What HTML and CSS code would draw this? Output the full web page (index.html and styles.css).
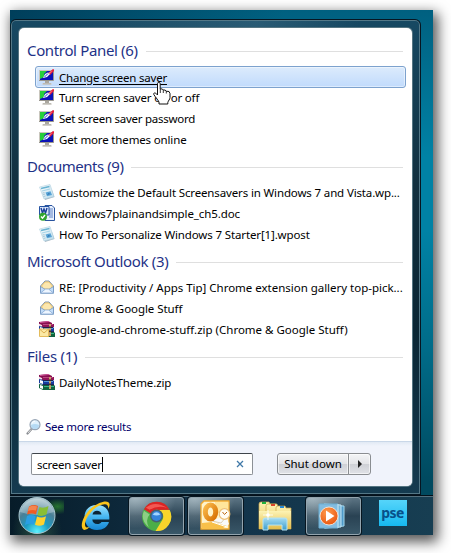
FILE: index.html
```html
<!DOCTYPE html>
<html lang="en">
<head>
<meta charset="utf-8">
<title>Start menu search</title>
<link rel="stylesheet" href="styles.css">
</head>
<body>
<svg class="defs" width="0" height="0" aria-hidden="true">
  <defs>
    <linearGradient id="paper" x1="0" y1="0" x2="1" y2="1"><stop offset="0" stop-color="#fff"/><stop offset="1" stop-color="#b9dcec"/></linearGradient>
    <linearGradient id="folder" x1="0" y1="0" x2="0" y2="1"><stop offset="0" stop-color="#fdf3b4"/><stop offset="1" stop-color="#e3bd4c"/></linearGradient>
    <linearGradient id="glass" x1="0" y1="0" x2="0" y2="1"><stop offset="0" stop-color="#a5dcf3"/><stop offset="1" stop-color="#3b9ccc"/></linearGradient>
    <linearGradient id="ie" x1="0" y1="0" x2="0" y2="1"><stop offset="0" stop-color="#9be2ff"/><stop offset=".5" stop-color="#42b4f0"/><stop offset="1" stop-color="#1686d4"/></linearGradient>
    <linearGradient id="gold" x1="0" y1="0" x2="1" y2="1"><stop offset="0" stop-color="#f9b94a"/><stop offset="1" stop-color="#d87204"/></linearGradient>
    <radialGradient id="orb" cx=".5" cy=".95" r=".95"><stop offset="0" stop-color="#5df3ff"/><stop offset=".35" stop-color="#1b9cc4"/><stop offset=".65" stop-color="#4a7f96"/><stop offset="1" stop-color="#b4cbd3"/></radialGradient>
    <radialGradient id="play" cx=".4" cy=".3" r=".8"><stop offset="0" stop-color="#ff9b4d"/><stop offset="1" stop-color="#e64f0a"/></radialGradient>
    <symbol id="monitor" viewBox="0 0 16 16">
      <path d="M0 1h15v11H0z" fill="#c9c6bd"/><path d="M14.500 1v10.500H0" fill="none" stroke="#99968f"/>
      <path d="M1 2h13v9H1z" fill="#0b12b8"/><path d="M1 2h7L5 5v3l-4 2z" fill="#26cf3a"/>
      <path d="M9 4l5-4 1 .5V2l-4 4z" fill="#e8203c"/><path d="M4 9l2-4 3-1.500L11 5 8 8z" fill="#fff"/><path d="M5.500 8l3.500-3.500" stroke="#2340c8"/><path d="M9.500 4.500l3-2" stroke="#f9a0b4" stroke-width=".8"/>
      <path d="M6 12h4v2h2v1.500H4V14h2z" fill="#aaa79f"/><path d="M3 15h10" stroke="#d0cec8"/>
    </symbol>
    <symbol id="post" viewBox="0 0 16 16">
      <path d="M4 5l9 1 2.500 7L6 16z" fill="#a9bac6"/><path d="M.5 3L11 .5l4 12L5 15z" fill="url(#paper)" stroke="#aed0df" stroke-width=".6"/>
      <path d="M2 4.500l8.500-2" stroke="#69b3d1" stroke-width="1.500"/><path d="M3 7l8-2" stroke="#a4d2e6"/><path d="M6.500 8.500l5-1.200 1.500 3.700-5 1.200z" fill="#5ba6d7"/><path d="M8 11l1.500-2 2 1z" fill="#2f72b0"/><path d="M3.500 9l2-.5m-1.500 2l2-.5m-1.500 2.500l2-.5" stroke="#a0bdcb" stroke-width=".8"/>
    </symbol>
    <symbol id="word" viewBox="0 0 16 16">
      <path d="M6 .5h7l2.500 2.500v12.500H6z" fill="#e9f1fd" stroke="#28539e"/><path d="M10 4h4m-4 2h4m-4 2h4m-4 2h4m-4 2h4" stroke="#3a67b7" stroke-width=".8"/>
      <path d="M.5 1.500h9.500v8.500H.5z" fill="#dce8fb" stroke="#2453a3"/><path d="M2 3l1.500 5L5 4l1.500 4L8 3" fill="none" stroke="#193f99" stroke-width="1.400"/>
      <circle cx="4" cy="11.700" r="4" fill="#31a52f"/><path d="M2 11.500l1.500 1.700L6 10" fill="none" stroke="#fff" stroke-width="1.400"/>
    </symbol>
    <symbol id="mail" viewBox="0 0 16 16">
      <path d="M1.500 7L6 2h4l4.500 5v7h-13z" fill="#fbe2a0" stroke="#7f97b5"/><path d="M3 6.500L6 3h4l3 3.500V10H3z" fill="#fce7ae" stroke="#e5b95c" stroke-width=".7"/>
      <path d="M1.500 7.500L8 11.500l6.500-4V14h-13z" fill="#c2dcf8" stroke="#6c91bd" stroke-width=".7"/><path d="M1.500 14L6.500 10h3l5 4z" fill="#eef6ff" stroke="#85a9d3" stroke-width=".8"/>
    </symbol>
    <symbol id="books" viewBox="0 0 16 16">
      <path d="M0 1l9-1 4 2v3L3 6 0 4z" fill="#87104f"/><path d="M1 1.500l9-1" stroke="#d4589d"/><path d="M0 3.500l3 1.500" stroke="#f3e4eb" stroke-width="1.500"/><path d="M3 3h12v3H4z" fill="#8e1457"/><path d="M4 3.500h10" stroke="#c7508c" stroke-width=".8"/>
      <path d="M0 5l4 1h10l1 1v4H4L0 9z" fill="#173b9d"/><path d="M1 6l3 1v3L1 9z" fill="#fff"/><path d="M5 7.500h9" stroke="#5294dd"/>
      <path d="M0 10l4 1h11l1 1v4H4l-4-2z" fill="#11633f"/><path d="M1 11l3 1v3l-3-1z" fill="#fff"/><path d="M5 12.500h10" stroke="#38b884"/>
      <path d="M10 3h2v12h-2z" fill="#caa06b"/><path d="M10 6h2m-2 4h2" stroke="#382818"/><path d="M4 10.700h11M4 6.500h10" stroke="#201b35" stroke-width=".8"/>
    </symbol>
    <symbol id="lens" viewBox="0 0 16 16">
      <path d="M1.500 14.500L6 9.500" stroke="#8c8f94" stroke-width="2.200" stroke-linecap="round"/><path d="M2 14l3-3.500" stroke="#ddd"/>
      <circle cx="9" cy="5.700" r="5" fill="#dff1fd" stroke="#97a5b5" stroke-width="1.200"/><path d="M5 6a4 4 0 0 0 8 0q-4-2-8 0z" fill="#b5daf4"/><path d="M6 4.500q1-2.500 3-2.300" stroke="#fff" fill="none"/>
    </symbol>
  </defs>
</svg>

<main class="desktop">
  <section class="menu">
    <div class="panel">
      <div class="results">
        <h2><span class="h1">Control Panel (6)</span></h2>
        <ul>
          <li class="selected"><svg><use href="#monitor"/></svg><span class="r1">Change screen saver</span></li>
          <li><svg><use href="#monitor"/></svg><span class="r2">Turn screen saver on or off</span></li>
          <li><svg><use href="#monitor"/></svg><span class="r3">Set screen saver password</span></li>
          <li><svg><use href="#monitor"/></svg><span class="r4">Get more themes online</span></li>
        </ul>
        <h2><span class="h2">Documents (9)</span></h2>
        <ul>
          <li><svg><use href="#post"/></svg><span class="r5">Customize the Default Screensavers in Windows 7 and Vista.wp...</span></li>
          <li><svg><use href="#word"/></svg><span class="r6">windows7plainandsimple_ch5.doc</span></li>
          <li><svg><use href="#post"/></svg><span class="r7">How To Personalize Windows 7 Starter[1].wpost</span></li>
        </ul>
        <h2><span class="h3">Microsoft Outlook (3)</span></h2>
        <ul>
          <li><svg><use href="#mail"/></svg><span class="r8">RE: [Productivity / Apps Tip] Chrome extension gallery top-pick...</span></li>
          <li><svg><use href="#mail"/></svg><span class="r9">Chrome &amp; Google Stuff</span></li>
          <li><svg viewBox="0 0 16 16"><use href="#books" width="16" height="16"/><path d="M.5 8h9v7.500h-9z" fill="#fbe9a4" stroke="#e3bb5c"/><path d="M.5 8L5 12l4.500-4" fill="none" stroke="#dcae50"/></svg><span class="r10">google-and-chrome-stuff.zip (Chrome &amp; Google Stuff)</span></li>
        </ul>
        <h2><span class="h4">Files (1)</span></h2>
        <ul>
          <li><svg><use href="#books"/></svg><span class="r11">DailyNotesTheme.zip</span></li>
        </ul>
        <a class="more"><svg><use href="#lens"/></svg><span>See more results</span></a>
      </div>
      <footer>
        <div class="search"><span>screen saver</span><i class="caret"></i>
          <svg class="clear" viewBox="0 0 8 8"><path d="M1 1l6 6M7 1L1 7" stroke="#3f78a8" stroke-width="1.300"/></svg></div>
        <div class="shutdown"><button>Shut down</button><button class="arrow"><svg viewBox="0 0 4 8"><path d="M0 0l4 4-4 4z" fill="#222"/></svg></button></div>
      </footer>
    </div>
  </section>

  <nav class="taskbar">
    <div class="task start">
      <svg width="46" height="38" viewBox="0 0 46 38">
        <circle cx="27" cy="18.500" r="18" fill="url(#orb)" stroke="#a8c4cd" stroke-width="1"/>
        <path d="M10 15a17.500 17.500 0 0 1 34 0q-17 6-34 0z" fill="#fff" opacity=".28"/>
        <path d="M19 9.500q4.500-2.500 9-.5l-2 8.500q-4-2-9 0z" fill="#ef5b24"/>
        <path d="M29.500 10q4 2 9-1l-2 8.500q-5 2.500-9 .5z" fill="#89bf35"/>
        <path d="M17 19q4.500-2 8.500.2l-2 8.500q-4-2-8.500.3z" fill="#2a9fe5"/>
        <path d="M27 19.500q4.500 2 9-.3l-2 8.300q-4.500 2.500-9 .3z" fill="#ffd22e"/>
        <path d="M19 10q4-2 8-.5l-1 4q-4-1-8 .5z" fill="#f7a16c" opacity=".6"/>
      </svg>
    </div>
    <div class="task ie">
      <svg width="32" height="32" viewBox="0 0 32 32">
        <path fill-rule="evenodd" d="M17 5C9 5 4.500 10 4.500 17S9 30 17 30c6 0 10.500-3 12-8h-7.500c-1 1.500-2.300 2-4.200 2-3 0-4.800-1.700-5-4.500h17C30 10 25 5 17 5zM12.500 14.500C13 12 14.500 10.800 17 10.800s4.200 1.200 4.500 3.700z" fill="url(#ie)"/>
        <path d="M4.500 30C-1.500 28 3 15 12 7.500 20 1 29-.5 29.500 4c.3 2-.5 3.700-1.500 5 .5-3-.5-4.700-3-4.800-4-.2-9 2.500-13.500 7.300C6 17.500 3 26 6.500 27.500l3-.5q-2.500 3-5 3z" fill="#fbc51c"/>
      </svg>
    </div>
    <div class="task open chrome">
      <svg width="31" height="31" viewBox="0 0 32 32">
        <circle cx="16" cy="16" r="15" fill="#4bae48"/>
        <path d="M3 8.500A15 15 0 0 1 29.500 9L16 9.200A7 7 0 0 0 10 13z" fill="#dc2424"/>
        <path d="M15 9.200h14.600A15 15 0 0 1 15 31l7.300-12A7 7 0 0 0 16 9z" fill="#f8d52b"/>
        <path d="M5 7Q14-1 27 7q-10-3-18 2z" fill="#ff756b" opacity=".65"/><path d="M3 10q-4 10 5 17-4-8 1-13z" fill="#a9dca0" opacity=".7"/>
        <circle cx="16" cy="15.500" r="6.700" fill="#45616f"/><circle cx="16" cy="15.500" r="5.200" fill="#3484db"/><path d="M12 14q4-5 8 0-4 2-8 0z" fill="#a2d5ff"/>
      </svg>
    </div>
    <div class="task open outlook">
      <svg width="31" height="32" viewBox="0 0 31 32">
        <path d="M4 1h25v28H1V4z" fill="#fff3ca" stroke="#f3a92a" stroke-width="1.300"/>
        <path d="M15 2h13v11H15z" fill="#ffe59b"/><path d="M13 20l13-4 3 8-3 3z" fill="#f9fafc"/><path d="M12 21l9 2 6-7" fill="none" stroke="#dccfb4"/>
        <ellipse cx="10.500" cy="12" rx="5.200" ry="7" fill="none" stroke="url(#gold)" stroke-width="5"/><path d="M2 23l10-1 15 4-6 3H2z" fill="#f8c04a"/><path d="M12 22l15 5" stroke="#fff"/>
        <circle cx="24.500" cy="14" r="5.300" fill="#fffdf5" stroke="#edc079" stroke-width="1.200"/><path d="M22.500 12l2 2.500L27 12" fill="none" stroke="#bd6a18"/>
      </svg>
    </div>
    <div class="task explorer">
      <svg width="34" height="30" viewBox="0 0 34 30">
        <path d="M1 28V3q0-2 2-2h8l1 2h6v25z" fill="url(#folder)" stroke="#c9a44b" stroke-width=".7"/><path d="M8 28V5q0-2 2-2h9l1 3h6v22z" fill="url(#folder)" stroke="#cba94e" stroke-width=".7"/>
        <path d="M18 28V7q0-2 2-2h7l1 2h5v21z" fill="url(#folder)" stroke="#c9a44b" stroke-width=".7"/><path d="M1 10h32v18H1z" fill="url(#folder)"/>
        <path d="M4 2h4" stroke="#20b13c" stroke-width="2"/><path d="M13 4h4" stroke="#dc4429" stroke-width="2"/><path d="M22 6h4" stroke="#2789d4" stroke-width="2"/>
        <path d="M5 29V19q0-2 2-2h20q2 0 2 2v10h-5v-5H10v5z" fill="url(#glass)" stroke="#b5e3f3"/><path d="M10 9v10M5 14h10" stroke="#fff" stroke-width=".8"/><circle cx="10" cy="14" r="1.800" fill="#fff"/>
      </svg>
    </div>
    <div class="task open player">
      <svg width="28" height="26" viewBox="0 0 28 26">
        <path d="M7 2l19 1v20L7 25z" fill="#4e99c8" stroke="#a4d9ef"/><path d="M6 1l17 1v22L6 25z" fill="#76b6da" stroke="#c3e5f4"/><path d="M1 1h19v24H1z" fill="#83bce0" stroke="#6aaed3"/><path d="M20 1v24" stroke="#d2effb"/>
        <circle cx="11" cy="13" r="9" fill="url(#play)" stroke="#fff0df" stroke-width=".8"/><path d="M8 7.500l8.500 5.500L8 18.500z" fill="#fff"/>
      </svg>
    </div>
    <div class="task pse"><span>pse</span></div>
  </nav>

  <svg class="pointer" width="18" height="23" viewBox="0 0 18 23">
    <path d="M4.500 1.500q0-1 1.300-1t1.400 1V7q2.500-.7 3 1 2.500-.5 2.900 1.200 3.900-.5 3.900 2.300v4c0 2-1.700 3-2.200 5v1.500H6V20C4.500 17 2.200 15 .8 12.500c-.8-1.700 1.700-2.500 3.700.5z" fill="#fff" stroke="#111" stroke-width="1"/>
    <path d="M7.300 7v4M10.300 8v3M13.300 9v2.500" stroke="#222" stroke-width=".9"/>
  </svg>
</main>
</body>
</html>
```
FILE: styles.css
```css
* { box-sizing: border-box; }
body {
  margin: 0;
  padding: 10px;
  width: 451px;
  height: 553px;
  overflow: hidden;
  background: #fff;
  font: 11.5px/21px "Noto Sans", "Open Sans", sans-serif;
  color: #000;
}
.defs { position: absolute; }
.desktop {
  position: relative;
  width: 423px;
  height: 525px;
  display: flex;
  flex-direction: column;
  background:
    linear-gradient(90deg, rgba(0,35,60,.55), transparent 65%) 0 0 / 100% 12px no-repeat,
    linear-gradient(#006080, #0082a5 28%, #0082a5 42%, #006b88 65%, #00495f 90%);
  box-shadow: 3px 5px 12px 2px rgba(0,0,0,.65);
}
.menu {
  width: 411px;
  height: 476px;
  margin-top: 9px;
  padding: 8px;
  border: 1px solid #061521;
  border-left-color: #0b202b;
  border-radius: 6px 6px 0 0;
  background: linear-gradient(90deg, transparent 10%, rgba(70,120,145,.4) 60%, transparent 85%) 0 0 / 100% 8px no-repeat,
    linear-gradient(#174963, #12303f 35%, #0a2634 65%, #153b50);
  box-shadow: inset 0 0 0 1px #547887;
}
.panel {
  width: 393px;
  height: 458px;
  display: flex;
  flex-direction: column;
  overflow: hidden;
  border-radius: 5px;
  background: #fff;
  box-shadow: 0 0 0 1px #557582;
}
.results {
  height: 413px;
  padding: 6px 6px 0 8px;
  display: flex;
  flex-direction: column;
}
h2 {
  margin: 0;
  height: 32px;
  padding-right: 3px;
  display: flex;
  align-items: center;
  gap: 8px;
  font-weight: 400;
  font-size: 15px;
  line-height: 32px;
  color: #1e3287;
  white-space: nowrap;
}
h2::after { content: ""; flex: 1; height: 1px; margin-top: 3px; background: #dfdfdf; }
.h1 { letter-spacing: -.35px; }
.h2 { letter-spacing: -.45px; }
.h3 { letter-spacing: -.33px; }
.h4 { letter-spacing: -.27px; }
ul { list-style: none; margin: 0 0 0 8px; padding: 0; }
li {
  height: 21px;
  padding-left: 4px;
  display: flex;
  align-items: center;
  gap: 4px;
  white-space: nowrap;
}
li svg, .more svg { width: 16px; height: 16px; flex: none; }
li svg { margin-top: -1px; }
.r1 { letter-spacing: -.22px; }
.r2 { letter-spacing: -.18px; }
.r3 { letter-spacing: -.27px; }
.r4 { letter-spacing: -.15px; }
.r5 { letter-spacing: -.14px; }
.r6 { letter-spacing: -.1px; }
.r7 { letter-spacing: -.13px; }
.r8 { letter-spacing: -.02px; }
.r9 { letter-spacing: -.07px; }
.r11 { letter-spacing: -.1px; }
.more span, .search span { letter-spacing: -.25px; }
.selected {
  height: 22px;
  margin-bottom: -1px;
  padding-left: 3px;
  border: 1px solid #7da2ce;
  border-radius: 3px;
  background: linear-gradient(#dcebfc, #c1dbfc);
  box-shadow: inset 0 0 0 1px rgba(255,255,255,.45);
}
.selected span { text-decoration: underline; text-underline-offset: 2px; }
.more {
  margin: auto 0 4px -1px;
  display: flex;
  align-items: center;
  gap: 3px;
  color: #00006b;
}
footer {
  flex: 1;
  padding: 11px 41px 0 12px;
  display: flex;
  justify-content: space-between;
  border-top: 1px solid #c9d7e8;
  background: linear-gradient(#e1e9f4, #f0f3fb 4px);
}
.search {
  width: 222px;
  height: 22px;
  padding: 0 8px 0 5px;
  display: flex;
  align-items: center;
  background: #fff;
  border: 1px solid #8c9096;
  border-top-color: #3f454b;
  border-radius: 2px;
}
.caret { width: 1px; height: 15px; background: #000; }
.clear { width: 8px; height: 8px; margin-left: auto; }
.shutdown { display: flex; height: 22px; }
button {
  width: 72px;
  padding: 0;
  font: inherit;
  line-height: 20px;
  color: #000;
  border: 1px solid #8a8d91;
  border-radius: 3px 0 0 3px;
  background: linear-gradient(#f3f4f6, #e4e5e8 48%, #cfd1d6 52%, #e0e2e7);
  box-shadow: inset 0 0 0 1px rgba(255,255,255,.6);
}
.arrow {
  width: 23px;
  margin-left: -1px;
  display: flex;
  align-items: center;
  justify-content: center;
  border-radius: 0 3px 3px 0;
}
.arrow svg { width: 4px; height: 8px; }
.taskbar {
  flex: 1;
  padding-top: 1px;
  display: flex;
  border-top: 1px solid #03101a;
  background: linear-gradient(90deg, #071c29, #12334a 50%, #173e52);
  box-shadow: inset 0 1px 0 #55707e;
}
.task {
  flex: none;
  width: 55px;
  height: 38px;
  margin-right: 4px;
  display: flex;
  align-items: center;
  justify-content: center;
}
.start { width: 54px; justify-content: flex-start; margin: 0; background: radial-gradient(ellipse at 88% 25%, rgba(50,150,45,.7), transparent 20%), radial-gradient(ellipse at 50% 90%, rgba(70,120,80,.5), transparent 65%); }
.ie { width: 64px; margin: 0 1px 0 0; }
.open {
  border: 1px solid #93a4ae;
  border-radius: 3px;
  background: radial-gradient(ellipse at 10% 0, rgba(210,225,230,.6), transparent 60%), linear-gradient(#5c7483, #294253 50%, #395768);
  box-shadow: 0 0 0 1px #071620;
}
.player svg { margin-right: 4px; }
.pse span {
  width: 28px;
  height: 26px;
  margin-bottom: 6px;
  background: linear-gradient(#56d5fa, #16b8f0);
  color: #07518a;
  font: bold 14px/25px "Noto Sans", sans-serif;
  letter-spacing: -.5px;
  text-align: center;
}
.pointer { position: absolute; left: 143px; top: 72px; }
```
